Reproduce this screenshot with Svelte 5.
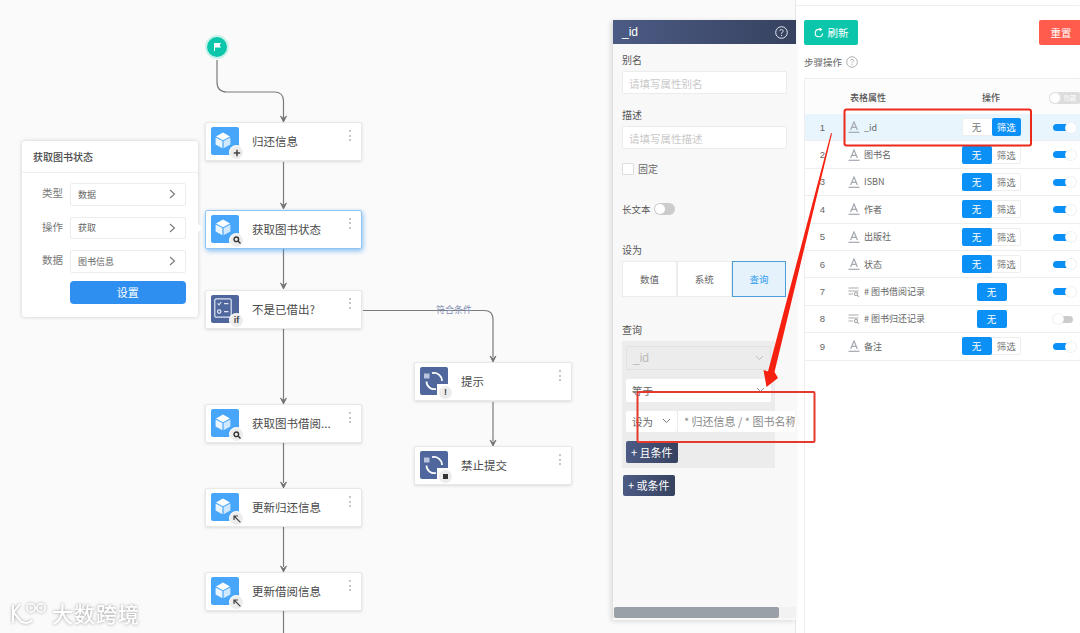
<script>
  const nodes = [
    { x: 205, y: 122, w: 157, title: '归还信息', kind: 'cube', badge: 'plus' },
    { x: 205, y: 209.5, w: 157, title: '获取图书状态', kind: 'cube', badge: 'search', active: true },
    { x: 205, y: 289.5, w: 157, title: '不是已借出?', kind: 'if', badge: 'if' },
    { x: 205, y: 404, w: 157, title: '获取图书借阅...', kind: 'cube', badge: 'search' },
    { x: 205, y: 488, w: 157, title: '更新归还信息', kind: 'cube', badge: 'arrow' },
    { x: 205, y: 572, w: 157, title: '更新借阅信息', kind: 'cube', badge: 'arrow' },
    { x: 414, y: 362, w: 157.5, title: '提示', kind: 'loop', badge: 'warn' },
    { x: 414, y: 446, w: 157.5, title: '禁止提交', kind: 'loop', badge: 'stop' }
  ];
  const lines = [
    'M217 60V82Q217 92 227 92H274Q283.5 92 283.5 101V118',
    'M283.5 162V205', 'M283.5 249V285', 'M283.5 329V400', 'M283.5 443V483', 'M283.5 527V567', 'M283.5 611V633',
    'M363 310.5H484Q493 310.5 493 319V357', 'M493 402V441'
  ];
  const heads = [[283.5,122],[283.5,209],[283.5,289],[283.5,404],[283.5,488],[283.5,572],[493,362],[493,446]];
  const fields = [['类型','数据'],['操作','获取'],['数据','图书信息']];
  const rows = [
    { n: 1, name: '_id', seg: 'filter', on: true, picked: true },
    { n: 2, name: '图书名', seg: 'none', on: true },
    { n: 3, name: 'ISBN', seg: 'none', on: true },
    { n: 4, name: '作者', seg: 'none', on: true },
    { n: 5, name: '出版社', seg: 'none', on: true },
    { n: 6, name: '状态', seg: 'none', on: true },
    { n: 7, name: '# 图书借阅记录', seg: 'single', on: true, sub: true },
    { n: 8, name: '# 图书归还记录', seg: 'single', on: false, sub: true },
    { n: 9, name: '备注', seg: 'none', on: true }
  ];
</script>

<div class="page">
  <section class="canvas">
    <svg class="wires" width="796" height="633" viewBox="0 0 796 633">
      {#each lines as d}<path {d} fill="none" stroke="#7b7b7b" stroke-width="1.2" />{/each}
      {#each heads as [x, y]}<path d="M{x - 3} {y - 6}L{x} {y - 3.5}L{x + 3} {y - 6}L{x} {y}Z" fill="#6f6f6f" stroke="#6f6f6f" stroke-width=".8" />{/each}
    </svg>

    <div class="start">
      <svg width="10" height="10" viewBox="0 0 10 10"><path d="M2 1H9L7.6 3.2L9 5.6H3V9H2Z" fill="#fff" /></svg>
    </div>

    {#each nodes as node}
      <div class="node" class:active={node.active} style="left:{node.x}px;top:{node.y}px;width:{node.w}px">
        <div class="ico {node.kind}">
          {#if node.kind === 'cube'}
            <svg width="16" height="17" viewBox="0 0 16 17"><path d="M8 .6L15 4.4L8 8.2L1 4.4Z" fill="#fff" /><path d="M.6 5.4L7.4 9.1V16.3L.6 12.5Z" fill="#e9f4ff" /><path d="M15.4 5.4L8.6 9.1V16.3L15.4 12.5Z" fill="#cfe7ff" /></svg>
          {:else if node.kind === 'if'}
            <svg width="18" height="20" viewBox="0 0 18 20" fill="none" stroke="#dfe6f5" stroke-width="1.2"><rect x=".8" y=".8" width="16.4" height="18.4" rx="1.5" /><path d="M3.6 5.4L5 6.8L7.2 4M10 5.6H14.4M10 13.6H14.4" /><circle cx="5.2" cy="13.6" r="1.7" /></svg>
          {:else}
            <svg width="22" height="22" viewBox="0 0 22 22" fill="none"><rect x="1" y="3.5" width="5.5" height="5" fill="#b9c4de" /><path d="M9 3.2C14 2 19 5.5 19 11" stroke="#fff" stroke-width="1.7" /><path d="M3.5 11.5C3.5 16.5 8 20 13 19" stroke="#fff" stroke-width="1.7" /></svg>
          {/if}
          <span class="badge">
            {#if node.badge === 'plus'}
              <svg width="8" height="8" viewBox="0 0 8 8"><path d="M4 .8V7.2M.8 4H7.2" stroke="#444" stroke-width="1.5" /></svg>
            {:else if node.badge === 'search'}
              <svg width="8" height="8" viewBox="0 0 8 8" fill="none" stroke="#333" stroke-width="1.4"><circle cx="3.3" cy="3.3" r="2.3" /><path d="M5 5L7.5 7.5" /></svg>
            {:else if node.badge === 'arrow'}
              <svg width="8" height="8" viewBox="0 0 8 8" fill="none" stroke="#444" stroke-width="1.2"><path d="M1 5V1H5M1 1L7.4 7.4" /></svg>
            {:else if node.badge === 'if'}
              <b class="mark">if</b>
            {:else if node.badge === 'warn'}
              <b class="mark">!</b>
            {:else}
              <i class="square"></i>
            {/if}
          </span>
        </div>
        <span class="node-title">{node.title}</span>
        <span class="dots"><i></i><i></i><i></i></span>
      </div>
    {/each}

    <span class="edge-label">符合条件</span>

    <div class="popup">
      <h3>获取图书状态</h3>
      <div class="popup-body">
        {#each fields as [label, value]}
          <div class="popup-row">
            <span class="popup-label">{label}</span>
            <span class="popup-field">{value}
              <svg width="7" height="10" viewBox="0 0 7 10" fill="none" stroke="#777" stroke-width="1.1"><path d="M1 1L5.5 5L1 9" /></svg>
            </span>
          </div>
        {/each}
        <button class="popup-btn">设置</button>
      </div>
      <i class="popup-caret"></i>
    </div>

    <div class="watermark">
      <svg width="43" height="27" viewBox="0 0 43 27" fill="none" stroke="#fff" stroke-width="2"><path d="M4 5V23M11 4L4 13M5 13L10 19C13 24 20 24 23 20" /><circle cx="22" cy="8" r="4.2" stroke-width="1.6" /><circle cx="32" cy="8" r="4.2" stroke-width="1.6" /></svg>
      <span>大数跨境</span>
    </div>

    <aside class="panel">
      <header class="panel-head">
        <span>_id</span>
        <svg width="13" height="13" viewBox="0 0 13 13" fill="none" stroke="#e6e9f2"><circle cx="6.5" cy="6.5" r="5.8" /><path d="M4.8 5C4.8 3 8.2 3 8.2 5C8.2 6.3 6.5 6.2 6.5 7.8M6.5 9V10" /></svg>
      </header>
      <div class="panel-body">
        <span class="lbl first">别名</span>
        <div class="input">请填写属性别名</div>
        <span class="lbl desc">描述</span>
        <div class="input">请填写属性描述</div>
        <div class="check"><i></i><span>固定</span></div>
        <div class="longtext"><span>长文本</span><i class="sw"><b></b></i></div>
        <span class="lbl setas">设为</span>
        <div class="tabs"><span>数值</span><span>系统</span><span class="cur">查询</span></div>
        <span class="lbl query">查询</span>
        <div class="qbox">
          <div class="dropdown disabled">_id<svg width="9" height="6" viewBox="0 0 9 6" fill="none" stroke="#bbb"><path d="M1 1L4.5 4.5L8 1" /></svg></div>
          <div class="dropdown eq">等于<svg width="9" height="6" viewBox="0 0 9 6" fill="none" stroke="#999"><path d="M1 1L4.5 4.5L8 1" /></svg></div>
          <div class="qrow">
            <div class="dropdown small">设为<svg width="9" height="6" viewBox="0 0 9 6" fill="none" stroke="#777"><path d="M1 1L4.5 4.5L8 1" /></svg></div>
            <div class="qval">* 归还信息 / * 图书名称</div>
          </div>
          <button class="dark">+ 且条件</button>
        </div>
        <button class="dark or">+ 或条件</button>
      </div>
      <div class="scroll"><i></i></div>
    </aside>
  </section>

  <section class="side">
    <div class="toolbar">
      <button class="refresh">
        <svg width="10" height="10" viewBox="0 0 10 10" fill="none" stroke="#fff" stroke-width="1.1"><path d="M8.6 5.5A3.7 3.7 0 1 1 5 1.4H7M5.8 0L7.4 1.4L5.8 2.8" /></svg>
        刷新
      </button>
      <button class="reset">重置</button>
    </div>
    <div class="caption">步骤操作
      <svg width="12" height="12" viewBox="0 0 12 12" fill="none" stroke="#aaa" stroke-width=".9"><circle cx="6" cy="6" r="5.3" /><path d="M4.4 4.6C4.4 2.8 7.6 2.8 7.6 4.6C7.6 5.8 6 5.7 6 7.2M6 8.2V9.2" /></svg>
    </div>
    <div class="table">
      <div class="thead">
        <span class="th-name">表格属性</span>
        <span class="th-op">操作</span>
        <span class="th-sw"><b></b><em>隐藏</em></span>
      </div>
      {#each rows as row}
        <div class="tr" class:picked={row.picked}>
          <span class="idx">{row.n}</span>
          <span class="type">
            {#if row.sub}
              <svg width="12" height="10" viewBox="0 0 12 10" fill="none" stroke="#aaa" stroke-width="1.1"><path d="M.5 1H10.5M.5 4H10.5M.5 7H5" /><circle cx="8" cy="7" r="1.6" /><path d="M9.2 8.2L11 9.8" /></svg>
            {:else}
              <svg width="12" height="12" viewBox="0 0 12 12" fill="none" stroke="#a4a8b0" stroke-width="1.2"><path d="M2.6 9L6 1L9.4 9M3.8 6.4H8.2" /><path d="M.5 11.3H11.5" /></svg>
            {/if}
          </span>
          <span class="name">{row.name}</span>
          <span class="op">
            {#if row.seg === 'single'}
              <span class="seg-single">无</span>
            {:else}
              <span class="seg">
                <span class:on={row.seg === 'none'}>无</span>
                <span class:on={row.seg === 'filter'}>筛选</span>
              </span>
            {/if}
          </span>
          <span class="toggle" class:off={!row.on}><i></i><b></b></span>
        </div>
      {/each}
    </div>
  </section>

  <svg class="notes" width="1080" height="633" viewBox="0 0 1080 633">
    <rect x="844.5" y="109.5" width="186.5" height="36" rx="2" fill="none" stroke="#ea2a1c" stroke-width="2" />
    <rect x="637.5" y="392" width="177" height="50" rx="1" fill="none" stroke="#e5392e" stroke-width="2" />
    <path d="M831 133L832 133.4L774.5 372L778 378L766.5 387L763.5 370L768 371.5Z" fill="#f5200f" />
  </svg>
</div>

<style>
  :global(body) { margin: 0; }
  .page {
    position: relative; display: flex; width: 1080px; height: 633px; overflow: hidden;
    font-family: "Noto Sans CJK SC", "Noto Sans", sans-serif; background: #fff; color: #444;
  }
  .canvas { position: relative; width: 796px; flex: none; background: #fafafa; border-right: 1px solid #e6e6e6; box-sizing: border-box; }
  .wires, .notes { position: absolute; left: 0; top: 0; pointer-events: none; }
  .start {
    position: absolute; left: 207px; top: 37px; width: 20px; height: 20px; border-radius: 50%;
    background: #0cc6ac; box-shadow: 0 0 0 2px #c9f2ea; display: flex; align-items: center; justify-content: center;
  }
  .node {
    position: absolute; height: 39px; background: #fff; border-radius: 2px; box-sizing: border-box;
    border: 1px solid #e8e8e8; box-shadow: 0 1px 3px rgba(0,0,0,.12);
  }
  .node.active { border-color: #8fc6f2; box-shadow: 1px 2px 5px rgba(60,150,240,.6); }
  .ico {
    position: absolute; left: 5px; top: 4px; width: 28px; height: 28px; border-radius: 2px;
    display: flex; align-items: center; justify-content: center; box-sizing: border-box; padding: 0 4px 2px 0;
  }
  .ico.cube { background: #48a6fa; }
  .ico.if, .ico.loop { background: #4f679c; }
  .ico.loop { padding: 0; }
  .ico.loop::after { content: ""; position: absolute; right: 0; bottom: 0; width: 11px; height: 11px; background: #fff; }
  .badge {
    position: absolute; left: 19px; top: 19px; width: 13px; height: 13px; border-radius: 50%; z-index: 1;
    background: #ececec; display: flex; align-items: center; justify-content: center; box-shadow: 0 0 0 1px #fff;
  }
  .mark { font: 700 9px/1 "Liberation Sans", sans-serif; color: #444; }
  .square { width: 5px; height: 5px; background: #333; }
  .node-title { position: absolute; left: 46px; top: 9px; font-size: 11.5px; line-height: 18px; color: #4a4a4a; white-space: nowrap; }
  .dots { position: absolute; right: 10px; top: 7px; display: flex; flex-direction: column; gap: 2.5px; }
  .dots i { width: 2px; height: 2px; border-radius: 50%; background: #b5b5b5; }
  .edge-label { position: absolute; left: 436px; top: 302px; font-size: 9px; line-height: 16px; color: #7f8cb0; }

  .popup {
    position: absolute; left: 22px; top: 141px; width: 176px; height: 176px; background: #fff; border-radius: 3px;
    box-shadow: 0 0 4px rgba(0,0,0,.18);
  }
  .popup h3 { margin: 0; height: 31px; line-height: 31px; padding-left: 11px; font-size: 10px; font-weight: 500; color: #4a4a4a; border-bottom: 1px solid #eceef2; }
  .popup-body { display: flex; flex-direction: column; gap: 11px; padding: 10px 12.5px 0 48px; }
  .popup-row { position: relative; }
  .popup-label { position: absolute; left: -28px; top: 2px; font-size: 10.5px; line-height: 16px; color: #777; }
  .popup-field {
    display: flex; justify-content: space-between; align-items: center; height: 22.5px; box-sizing: border-box;
    padding: 0 9px 0 7px; border: 1px solid #ececec; border-radius: 2px; font-size: 9px; color: #666; background: #fff;
  }
  .popup-btn {
    margin-top: -3px; height: 23px; border: 0; border-radius: 4px; background: #2e8ff0; color: #fff;
    font: 11px "Noto Sans CJK SC", sans-serif; padding: 0;
  }
  .popup-caret { position: absolute; right: -3px; top: 84px; width: 6px; height: 6px; background: #fff; transform: rotate(45deg); }

  .watermark {
    position: absolute; left: 9px; top: 599px; display: flex; align-items: center; color: #fff;
    filter: drop-shadow(0 0 1.5px #9a9a9a);
  }
  .watermark span { font-size: 21px; line-height: 28px; letter-spacing: 1px; font-weight: 500; }

  .panel {
    position: absolute; left: 613px; top: 20px; width: 183px; height: 600px; background: #f8f8f8;
    box-shadow: -2px 1px 5px rgba(0,0,0,.14); display: flex; flex-direction: column;
  }
  .panel-head {
    height: 24px; flex: none; display: flex; justify-content: space-between; align-items: center; padding: 0 8px 0 9px;
    background: linear-gradient(90deg, #4c5b85, #36425f); color: #fff; font: 12px "Liberation Sans", sans-serif;
  }
  .panel-body { flex: 1; min-height: 0; padding: 0 9px; display: flex; flex-direction: column; align-items: flex-start; }
  .lbl { font-size: 10px; line-height: 14px; color: #555; }
  .lbl.first { margin-top: 9px; }
  .lbl.desc { margin-top: 14px; }
  .lbl.setas { margin-top: 28px; }
  .lbl.query { margin-top: 26px; }
  .input {
    width: 164.5px; height: 23px; margin-top: 4px; box-sizing: border-box; padding-left: 6px; background: #fff;
    border: 1px solid #ececec; border-radius: 2px; font-size: 10.5px; line-height: 23px; color: #c9c9c9;
  }
  .check { display: flex; align-items: center; gap: 4px; margin-top: 14px; font-size: 10px; line-height: 12px; color: #666; }
  .check i { width: 12px; height: 12px; box-sizing: border-box; border: 1px solid #ddd; background: #fff; border-radius: 1px; }
  .longtext { display: flex; align-items: center; gap: 3px; margin-top: 28px; font-size: 9.5px; line-height: 12px; color: #555; }
  .sw { position: relative; width: 21px; height: 12px; border-radius: 6px; background: #ccc; }
  .sw b { position: absolute; left: 1px; top: 1px; width: 10px; height: 10px; border-radius: 50%; background: #fff; }
  .tabs { display: flex; width: 164.5px; height: 35.5px; margin-top: 4px; }
  .tabs span {
    flex: 1; background: #fff; border: 1px solid #ececec; box-sizing: border-box; display: flex; align-items: center;
    justify-content: center; font-size: 9.5px; color: #666;
  }
  .tabs .cur { background: #e5f2fb; border-color: #4a9fd8; color: #2e9cf0; }
  .qbox { width: 153px; height: 127px; margin-top: 4px; padding: 5px 4px; box-sizing: border-box; background: #ececec; display: flex; flex-direction: column; align-items: flex-start; }
  .dropdown {
    width: 145px; height: 23px; box-sizing: border-box; padding: 0 6px; display: flex; justify-content: space-between; align-items: center;
    background: #fff; border-radius: 2px; font-size: 10.5px; color: #666;
  }
  .dropdown.disabled { height: 24px; background: #ececec; border: 1px solid #e2e2e2; color: #bbb; font-family: "Liberation Sans", sans-serif; font-size: 12px; }
  .dropdown.eq { margin-top: 9px; }
  .qrow { display: flex; gap: 1px; margin-top: 9px; height: 21.5px; width: 169px; flex: none; }
  .dropdown.small { width: 51px; height: 21.5px; }
  .qval {
    width: 117px; height: 21.5px; padding-left: 6px; box-sizing: border-box; background: #fff; font-size: 11px; line-height: 21px;
    color: #888; white-space: nowrap; overflow: hidden;
  }
  .dark {
    width: 51.5px; height: 21.5px; flex: none; margin-top: 9px; padding: 0; border: 0; border-radius: 2px; font: 11px "Noto Sans CJK SC", sans-serif; color: #fff;
    background: linear-gradient(90deg, #4c5b85, #36425f); white-space: nowrap;
  }
  .dark.or { margin: 7px 0 0 1px; }
  .scroll { position: absolute; left: 0; right: 0; bottom: 2px; height: 11px; background: #f2f2f2; }
  .scroll i { display: block; margin-left: 1px; width: 165px; height: 11px; border-radius: 2px; background: #9aa0a8; }

  .side { flex: 1; min-width: 0; position: relative; padding: 20px 0 0 8px; box-shadow: inset 0 5px 0 #fff, inset 0 6px 1px #eee; }
  .toolbar { display: flex; justify-content: space-between; height: 25px; margin-right: -13px; }
  .toolbar button { border: 0; border-radius: 2px; color: #fff; font: 10.5px "Noto Sans CJK SC", sans-serif; padding: 0; display: flex; align-items: center; justify-content: center; gap: 4px; }
  .refresh { width: 54px; background: #0cc6ac; }
  .reset { width: 54px; background: #ff5c4d; padding-right: 10px !important; box-sizing: border-box; }
  .caption { display: flex; align-items: center; gap: 4px; height: 14px; margin-top: 10px; font-size: 9.5px; line-height: 14px; color: #666; }
  .table { margin-top: 9px; border: 1px solid #eee; border-right: 0; height: 560px; box-sizing: border-box; }
  .thead { position: relative; height: 35px; background: #fcfcfc; }
  .th-name { position: absolute; left: 45px; top: 12px; font-size: 9px; line-height: 14px; font-weight: 500; color: #555; }
  .th-op { position: absolute; left: 177px; top: 12px; font-size: 9px; line-height: 14px; font-weight: 500; color: #555; }
  .th-sw { position: absolute; left: 244px; top: 12.5px; width: 34px; height: 12px; border-radius: 6px; background: #ddd; }
  .th-sw b { position: absolute; left: 0; top: 0; width: 12px; height: 12px; border-radius: 50%; background: #fff; box-shadow: 0 0 0 1px #ddd inset; }
  .th-sw em { position: absolute; left: 15px; top: 1px; font: normal 6px/10px "Noto Sans CJK SC", sans-serif; color: #fff; white-space: nowrap; }
  .tr { position: relative; display: flex; align-items: center; height: 27.4px; box-sizing: border-box; border-bottom: 1px solid #eee; font-size: 9px; color: #666; }
  .tr.picked { background: #e8f5fd; }
  .idx { width: 35px; text-align: center; font: 9.5px "Liberation Sans", sans-serif; color: #666; }
  .type { display: flex; width: 24px; padding: 0 0 0 8px; box-sizing: border-box; }
  .name { width: 94px; white-space: nowrap; }
  .op { display: flex; justify-content: center; width: 71px; margin-left: -2px; flex: none; }
  .seg { display: flex; width: 59.5px; height: 18px; box-sizing: border-box; border-radius: 2px; box-shadow: 0 0 0 1px #eee inset; background: #fff; }
  .seg span { flex: 1; display: flex; align-items: center; justify-content: center; font-size: 9.5px; color: #777; }
  .seg .on { background: #0b90f5; color: #fff; border-radius: 2px; }
  .seg-single { width: 30px; height: 18px; border-radius: 2px; background: #0b90f5; color: #fff; display: flex; align-items: center; justify-content: center; font-size: 9.5px; }
  .toggle { position: absolute; left: 248px; top: 8.5px; width: 23px; height: 10px; }
  .toggle i { position: absolute; left: 0; top: 1.5px; width: 16px; height: 7px; border-radius: 4px; background: #0b90f5; }
  .toggle b { position: absolute; left: 13px; top: 0; width: 10px; height: 10px; border-radius: 50%; background: #fff; box-shadow: 0 0 0 1px #eef1f4; }
  .toggle.off i { left: 4px; background: #ccc; }
  .toggle.off b { left: 0; }
</style>
